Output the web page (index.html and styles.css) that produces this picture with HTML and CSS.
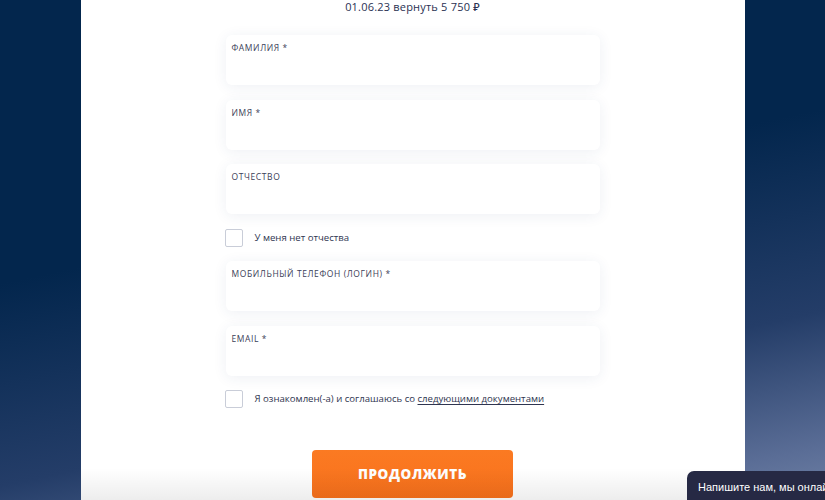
FILE: index.html
```html
<!DOCTYPE html>
<html lang="ru">
<head>
<meta charset="utf-8">
<link rel="stylesheet" href="styles.css">
</head>
<body>
<div class="page">
  <main class="panel">
    <div class="summary">01.06.23 вернуть 5 750 ₽</div>
    <form class="form">
      <label class="field"><span class="field-label">Фамилия *</span></label>
      <label class="field"><span class="field-label">Имя *</span></label>
      <label class="field"><span class="field-label">Отчество</span></label>
      <div class="check-row"><span class="checkbox"></span><span class="check-text">У меня нет отчества</span></div>
      <label class="field"><span class="field-label">Мобильный телефон (логин) *</span></label>
      <label class="field field-email"><span class="field-label">Email *</span></label>
      <div class="check-row"><span class="checkbox"></span><span class="check-text">Я ознакомлен(-а) и соглашаюсь со <a class="doc-link" href="#">следующими документами</a></span></div>
      <div class="actions"><button type="button" class="btn">Продолжить</button></div>
    </form>
    <div class="bottom-fade"></div>
  </main>
</div>
<div class="chat">Напишите нам, мы онлайн!</div>
</body>
</html>
```

FILE: styles.css
```css
html, body {
  margin: 0;
  padding: 0;
  height: 100%;
  overflow: hidden;
}
body {
  font-family: "Open Sans", "Noto Sans", sans-serif;
  background: linear-gradient(168deg, #03264d 0%, #03264d 42%, #243d68 72%, #5a6d96 92%, #6e80a4 100%);
}
.page {
  display: flex;
  justify-content: center;
  height: 500px;
}
.panel {
  position: relative;
  width: 664px;
  background: #fff;
  display: flex;
  flex-direction: column;
  align-items: center;
}
.summary {
  margin-top: 0;
  font-size: 11px;
  line-height: 13px;
  font-weight: 500;
  color: #2a3152;
  letter-spacing: 0.2px;
}
.form {
  width: 374px;
  margin-top: 22px;
  display: flex;
  flex-direction: column;
  gap: 14.5px;
}
.field {
  display: block;
  height: 50px;
  box-sizing: border-box;
  padding: 7px 6px;
  background: #fff;
  border-radius: 6px;
  box-shadow: 0 2px 14px rgba(40, 60, 120, 0.08);
}
.field-label {
  display: block;
  font-size: 8.5px;
  line-height: 12px;
  text-transform: uppercase;
  letter-spacing: 0.6px;
  color: #3b4058;
}
.check-row {
  display: flex;
  align-items: center;
  height: 18px;
  margin-left: -1px;
}
.checkbox {
  width: 16px;
  height: 16px;
  border: 1px solid #c9cdd8;
  border-radius: 2px;
  flex: none;
}
.check-text {
  margin-left: 12px;
  font-size: 9.6px;
  color: #2f3550;
  margin-top: -1px;
}
.doc-link {
  color: #2f3550;
  text-decoration: underline;
  text-underline-offset: 2px;
}
.actions {
  display: flex;
  justify-content: center;
  margin-top: 27px;
}
.btn {
  width: 201px;
  height: 48px;
  border: 0;
  border-radius: 4px;
  background: linear-gradient(180deg, #fb7a22 0%, #f9711c 100%);
  color: #fff;
  font-family: "Open Sans", sans-serif;
  font-size: 13.5px;
  font-weight: 800;
  letter-spacing: 0.6px;
  text-transform: uppercase;
}
.bottom-fade {
  position: absolute;
  left: 0;
  right: 0;
  bottom: 0;
  height: 32px;
  background: linear-gradient(180deg, rgba(0,0,0,0) 0%, rgba(0,0,0,0.07) 100%);
  pointer-events: none;
}
.chat {
  position: fixed;
  left: 687px;
  top: 471px;
  width: 180px;
  height: 40px;
  box-sizing: border-box;
  padding: 8px 11px;
  background: #262944;
  border-radius: 7px 0 0 0;
  color: #fff;
  font-family: "Liberation Sans", Arial, sans-serif;
  font-size: 11px;
  line-height: 16px;
  white-space: nowrap;
}
```
